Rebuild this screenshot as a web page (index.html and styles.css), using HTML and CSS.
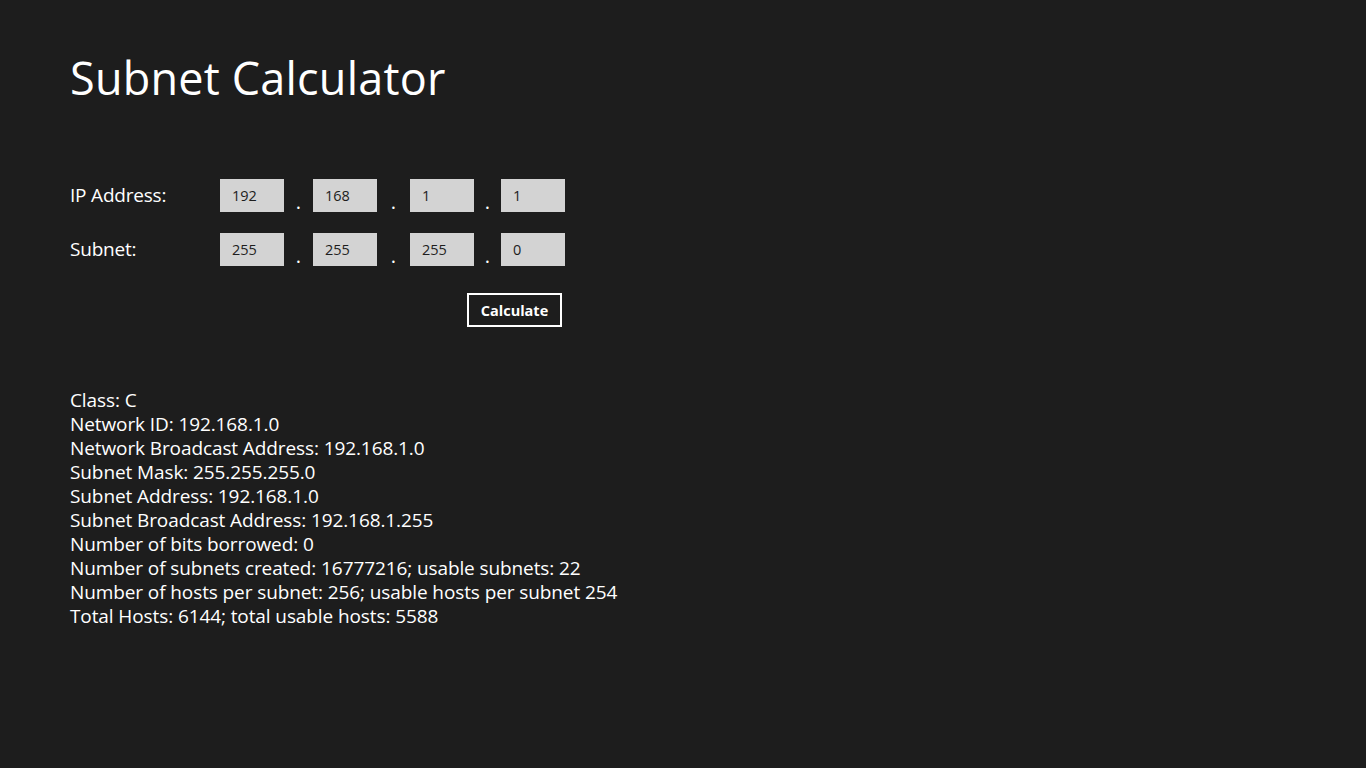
FILE: index.html
```html
<!DOCTYPE html>
<html>
<head>
<meta charset="utf-8">
<link rel="stylesheet" href="styles.css">
</head>
<body>
<main class="page">
  <h1 class="title">Subnet Calculator</h1>
  <section class="form">
    <div class="row">
      <div class="label">IP Address:</div>
      <div class="box">192</div><div class="dot d1">.</div>
      <div class="box">168</div><div class="dot d2">.</div>
      <div class="box">1</div><div class="dot d3">.</div>
      <div class="box">1</div>
    </div>
    <div class="row">
      <div class="label">Subnet:</div>
      <div class="box">255</div><div class="dot d1">.</div>
      <div class="box">255</div><div class="dot d2">.</div>
      <div class="box">255</div><div class="dot d3">.</div>
      <div class="box">0</div>
    </div>
    <div class="actions">
      <button class="btn">Calculate</button>
    </div>
  </section>
  <section class="results">
    <div>Class: C</div>
    <div>Network ID: 192.168.1.0</div>
    <div>Network Broadcast Address: 192.168.1.0</div>
    <div>Subnet Mask: 255.255.255.0</div>
    <div>Subnet Address: 192.168.1.0</div>
    <div>Subnet Broadcast Address: 192.168.1.255</div>
    <div>Number of bits borrowed: 0</div>
    <div>Number of subnets created: 16777216; usable subnets: 22</div>
    <div>Number of hosts per subnet: 256; usable hosts per subnet 254</div>
    <div>Total Hosts: 6144; total usable hosts: 5588</div>
  </section>
</main>
</body>
</html>
```
FILE: styles.css
```css
html, body {
  margin: 0;
  padding: 0;
  background: #1d1d1d;
  color: #ffffff;
  font-family: "Open Sans", "Noto Sans", sans-serif;
}
.page {
  padding: 0 0 0 70px;
}
.title {
  margin: 0;
  padding-top: 48px;
  font-size: 45px;
  font-weight: 400;
  line-height: 60px;
  letter-spacing: 0.2px;
}
.form {
  margin-top: 71px;
}
.row {
  display: flex;
  align-items: flex-start;
  height: 33px;
  margin-bottom: 21px;
}
.label {
  width: 150px;
  font-size: 19px;
  line-height: 33px;
  letter-spacing: -0.2px;
}
.box {
  width: 52px;
  height: 33px;
  padding-left: 12px;
  background: #d3d3d3;
  color: #1d1d1d;
  font-size: 14.5px;
  line-height: 33px;
}
.dot {
  text-align: center;
  font-size: 20px;
  line-height: 16px;
  padding-top: 15px;
}
.d1 { width: 29px; }
.d2 { width: 33px; }
.d3 { width: 27px; }
.actions {
  display: flex;
  padding-left: 397px;
  margin-top: 27px;
}
.btn {
  width: 95px;
  height: 34px;
  background: transparent;
  border: 2px solid #ffffff;
  color: #ffffff;
  font-family: "Open Sans", "Noto Sans", sans-serif;
  font-weight: 700;
  font-size: 14.5px;
  padding: 0;
}
.results {
  margin-top: 61px;
  font-size: 19px;
  line-height: 24px;
  letter-spacing: -0.1px;
}
```
